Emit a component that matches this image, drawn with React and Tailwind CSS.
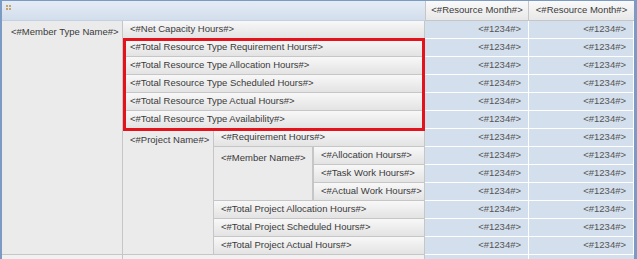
import React from 'react';

const label = 'bg-linear-to-b from-[#f8f8f8] to-[#e3e3e3] border-b border-r border-[#c6c6c6] pl-[7px] text-left whitespace-nowrap';
const plain = 'bg-[#ebebeb] border-b border-r border-[#c6c6c6] pl-[7px] align-top text-left whitespace-nowrap';
const data = 'bg-[#d3dfec] border-b border-r border-white pr-[7px] text-right text-[#555]';

function Data() {
  return (
    <>
      <td className={data}>&lt;#1234#&gt;</td>
      <td className={data}>&lt;#1234#&gt;</td>
    </>
  );
}

export default function App() {
  return (
    <div className="relative w-[637px] h-[259px] overflow-hidden bg-white font-['Liberation_Sans',Arial,sans-serif] text-[9.5px] text-[#3a3a3a]">
      <div className="border-l-2 border-t border-r-[3px] border-[#7b9bc5]">
        <table className="table-fixed border-separate border-spacing-0 w-[632px]">
          <colgroup>
            <col className="w-[121px]" />
            <col className="w-[91px]" />
            <col className="w-[99px]" />
            <col className="w-[112px]" />
            <col className="w-[104px]" />
            <col className="w-[105px]" />
          </colgroup>
          <tbody>
            <tr className="h-[20px]">
              <td colSpan={4} className="bg-linear-to-b from-[#e4ecf6] to-[#d2deec] border-b border-[#c3d1e3] align-top">
                {/* drag grip */}
                <div className="grid grid-cols-2 gap-[1px] w-[5px] mt-[4px] ml-[4px]">
                  <span className="w-[2px] h-[2px] bg-[#c9a46a]" />
                  <span className="w-[2px] h-[2px] bg-[#c9a46a]" />
                  <span className="w-[2px] h-[2px] bg-[#c9a46a]" />
                  <span className="w-[2px] h-[2px] bg-[#c9a46a]" />
                </div>
              </td>
              <td className="bg-linear-to-b from-[#fafafa] to-[#e8e8e8] border-l border-b border-r border-[#c6c6c6] text-center">&lt;#Resource Month#&gt;</td>
              <td className="bg-linear-to-b from-[#fafafa] to-[#e8e8e8] border-b border-[#c6c6c6] text-center">&lt;#Resource Month#&gt;</td>
            </tr>
            <tr className="h-[18px]">
              <td rowSpan={13} className="bg-[#ebebeb] border-b border-r border-[#c6c6c6] align-top pl-[9px] pt-[4px] whitespace-nowrap">&lt;#Member Type Name#&gt;</td>
              <td colSpan={3} className={label}>&lt;#Net Capacity Hours#&gt;</td>
              <Data />
            </tr>
            <tr className="h-[18px]">
              <td colSpan={3} className={label}>&lt;#Total Resource Type Requirement Hours#&gt;</td>
              <Data />
            </tr>
            <tr className="h-[18px]">
              <td colSpan={3} className={label}>&lt;#Total Resource Type Allocation Hours#&gt;</td>
              <Data />
            </tr>
            <tr className="h-[18px]">
              <td colSpan={3} className={label}>&lt;#Total Resource Type Scheduled Hours#&gt;</td>
              <Data />
            </tr>
            <tr className="h-[18px]">
              <td colSpan={3} className={label}>&lt;#Total Resource Type Actual Hours#&gt;</td>
              <Data />
            </tr>
            <tr className="h-[18px]">
              <td colSpan={3} className={label}>&lt;#Total Resource Type Availability#&gt;</td>
              <Data />
            </tr>
            <tr className="h-[18px]">
              <td rowSpan={7} className={plain + ' pt-[4px]'}>&lt;#Project Name#&gt;</td>
              <td colSpan={2} className={label}>&lt;#Requirement Hours#&gt;</td>
              <Data />
            </tr>
            <tr className="h-[18px]">
              <td rowSpan={3} className={plain + ' pt-[4px]'}>&lt;#Member Name#&gt;</td>
              <td className={label + ' border-l'}>&lt;#Allocation Hours#&gt;</td>
              <Data />
            </tr>
            <tr className="h-[18px]">
              <td className={label + ' border-l'}>&lt;#Task Work Hours#&gt;</td>
              <Data />
            </tr>
            <tr className="h-[18px]">
              <td className={label + ' border-l'}>&lt;#Actual Work Hours#&gt;</td>
              <Data />
            </tr>
            <tr className="h-[18px]">
              <td colSpan={2} className={label}>&lt;#Total Project Allocation Hours#&gt;</td>
              <Data />
            </tr>
            <tr className="h-[18px]">
              <td colSpan={2} className={label}>&lt;#Total Project Scheduled Hours#&gt;</td>
              <Data />
            </tr>
            <tr className="h-[18px]">
              <td colSpan={2} className={label}>&lt;#Total Project Actual Hours#&gt;</td>
              <Data />
            </tr>
            <tr className="h-[18px]">
              <td className="bg-[#f1f1f1] border-r border-[#c6c6c6]" />
              <td colSpan={3} className="bg-[#f1f1f1] border-r border-[#c6c6c6]" />
              <td className="bg-[#d3dfec] border-r border-white" />
              <td className="bg-[#d3dfec]" />
            </tr>
          </tbody>
        </table>
      </div>
      {/* highlight box over the resource type totals */}
      <div className="absolute left-[123px] top-[38px] w-[302px] h-[93px] border-[3px] border-[#e3121b]" />
    </div>
  );
}
